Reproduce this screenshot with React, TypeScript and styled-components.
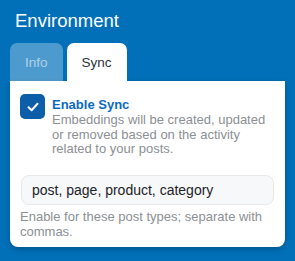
import React from "react";
import styled, { createGlobalStyle } from "styled-components";

const Global = createGlobalStyle`
  html, body { margin: 0; padding: 0; background: #0170b9; }
  body { font-family: "Liberation Sans", Arial, sans-serif; }
  * { box-sizing: border-box; }
`;

const Page = styled.div`
  width: 295px;
  height: 261px;
  background: #0170b9;
  padding: 10px 10px 0 10px;
`;

const Title = styled.h2`
  margin: 0 0 0 5px;
  color: #ffffff;
  font-size: 18.5px;
  font-weight: 400;
  line-height: 22px;
  height: 33px;
`;

const Tabs = styled.div`
  display: flex;
  gap: 4px;
  height: 38px;
`;

const Tab = styled.div<{ $active?: boolean }>`
  display: flex;
  align-items: center;
  padding: 0 15px;
  border-radius: 7px 7px 0 0;
  font-size: 13.5px;
  background: ${(p) => (p.$active ? "#ffffff" : "rgba(255,255,255,0.3)")};
  color: ${(p) => (p.$active ? "#2c3338" : "rgba(255,255,255,0.55)")};
`;

const Panel = styled.div`
  background: #ffffff;
  border-radius: 0 0 8px 8px;
  padding: 13px 10px 8px 10px;
  box-shadow: 0 2px 6px rgba(0, 0, 0, 0.25);
`;

const CheckRow = styled.div`
  display: flex;
  gap: 7px;
  align-items: flex-start;
`;

const CheckBox = styled.div`
  flex: none;
  width: 25px;
  height: 25px;
  border-radius: 5px;
  background: #0c5ea8;
  display: flex;
  align-items: center;
  justify-content: center;
`;

const CheckText = styled.div`
  display: flex;
  flex-direction: column;
  padding-top: 3px;
`;

const Label = styled.div`
  color: #0b6bbf;
  font-weight: 700;
  font-size: 13px;
  line-height: 16px;
`;

const Desc = styled.div`
  color: #8c8f94;
  font-size: 13px;
  line-height: 14.5px;
`;

const Input = styled.div`
  margin: 18px 1px 0 1px;
  height: 30px;
  border: 1px solid #e6e8eb;
  border-radius: 8px;
  background: #f7f8fa;
  display: flex;
  align-items: center;
  padding: 0 10px;
  font-size: 14px;
  color: #1d2327;
`;

const Help = styled.div`
  margin-top: 4px;
  color: #8c8f94;
  font-size: 13px;
  line-height: 15px;
`;

export default function App() {
  return (
    <>
      <Global />
      <Page>
        <Title>Environment</Title>
        <Tabs>
          <Tab>Info</Tab>
          <Tab $active>Sync</Tab>
        </Tabs>
        <Panel>
          <CheckRow>
            <CheckBox>
              <svg width="14" height="14" viewBox="0 0 14 14">
                <path d="M2.5 7.3 L5.6 10.2 L11.5 3.8" fill="none" stroke="#fff" strokeWidth="2" strokeLinecap="round" strokeLinejoin="round" />
              </svg>
            </CheckBox>
            <CheckText>
              <Label>Enable Sync</Label>
              <Desc>Embeddings will be created, updated or removed based on the activity related to your posts.</Desc>
            </CheckText>
          </CheckRow>
          <Input>post, page, product, category</Input>
          <Help>Enable for these post types; separate with commas.</Help>
        </Panel>
      </Page>
    </>
  );
}
